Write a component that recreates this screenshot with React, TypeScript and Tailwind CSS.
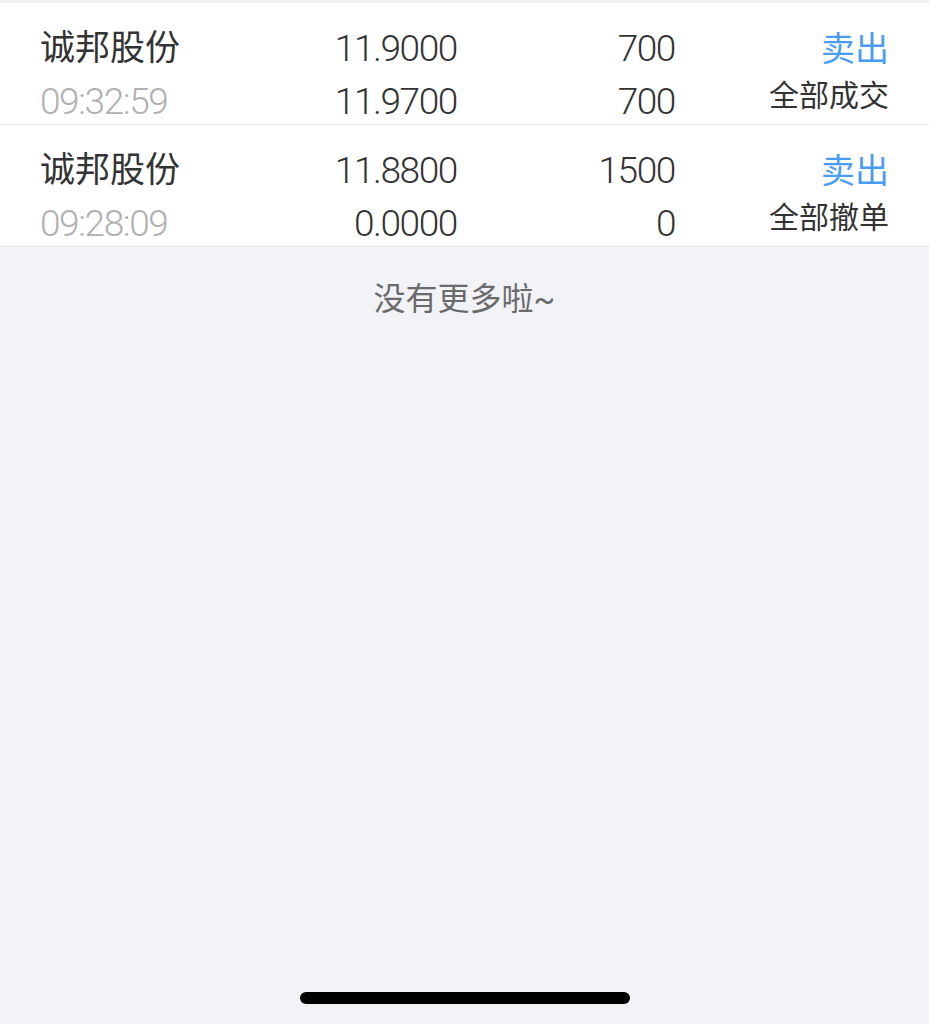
import React from "react";

type Order = {
  name: string;
  time: string;
  price: string;
  dealPrice: string;
  qty: string;
  dealQty: string;
  side: string;
  status: string;
};

const orders: Order[] = [
  { name: "诚邦股份", time: "09:32:59", price: "11.9000", dealPrice: "11.9700", qty: "700", dealQty: "700", side: "卖出", status: "全部成交" },
  { name: "诚邦股份", time: "09:28:09", price: "11.8800", dealPrice: "0.0000", qty: "1500", dealQty: "0", side: "卖出", status: "全部撤单" },
];

function OrderRow({ order }: { order: Order }) {
  return (
    <div className="grid grid-cols-[205px_212px_218px_1fr] border-b border-[#e8e8ec] bg-white pl-[40px] pr-[40px] pt-[24px]">
      <div className="flex flex-col gap-[9px]">
        <div className="h-[44px] text-[35px] leading-[44px] text-[#333333]">{order.name}</div>
        <div className="h-[44px] text-[37px] font-light leading-[44px] tracking-[-1.4px] text-[#b0b0b0]">{order.time}</div>
      </div>
      <div className="flex flex-col items-end gap-[9px]">
        <div className="h-[44px] text-[37px] font-light leading-[44px] tracking-[-1.4px] text-[#333333]">{order.price}</div>
        <div className="h-[44px] text-[37px] font-light leading-[44px] tracking-[-1.4px] text-[#333333]">{order.dealPrice}</div>
      </div>
      <div className="flex flex-col items-end gap-[9px]">
        <div className="h-[44px] text-[37px] font-light leading-[44px] tracking-[-1.4px] text-[#333333]">{order.qty}</div>
        <div className="h-[44px] text-[37px] font-light leading-[44px] tracking-[-1.4px] text-[#333333]">{order.dealQty}</div>
      </div>
      <div className="flex flex-col items-end gap-[9px]">
        <div className="h-[44px] text-[34px] leading-[44px] text-[#4a9cf2]">{order.side}</div>
        <div className="h-[44px] text-[30px] leading-[32px] text-[#333333]">{order.status}</div>
      </div>
    </div>
  );
}

export default function App() {
  return (
    <main
      className="flex min-h-screen flex-col bg-[#f2f3f7] pt-[3px]"
      style={{ fontFamily: "Roboto, 'Noto Sans CJK SC', sans-serif" }}
    >
      {orders.map((o, i) => (
        <OrderRow key={i} order={o} />
      ))}

      <div className="mt-[32px] text-center text-[32px] leading-[40px] text-[#6b6b6b]">没有更多啦~</div>

      <div className="flex-1" />

      <div className="mb-[20px] flex justify-center">
        <div className="h-[12px] w-[330px] rounded-full bg-black" />
      </div>
    </main>
  );
}
